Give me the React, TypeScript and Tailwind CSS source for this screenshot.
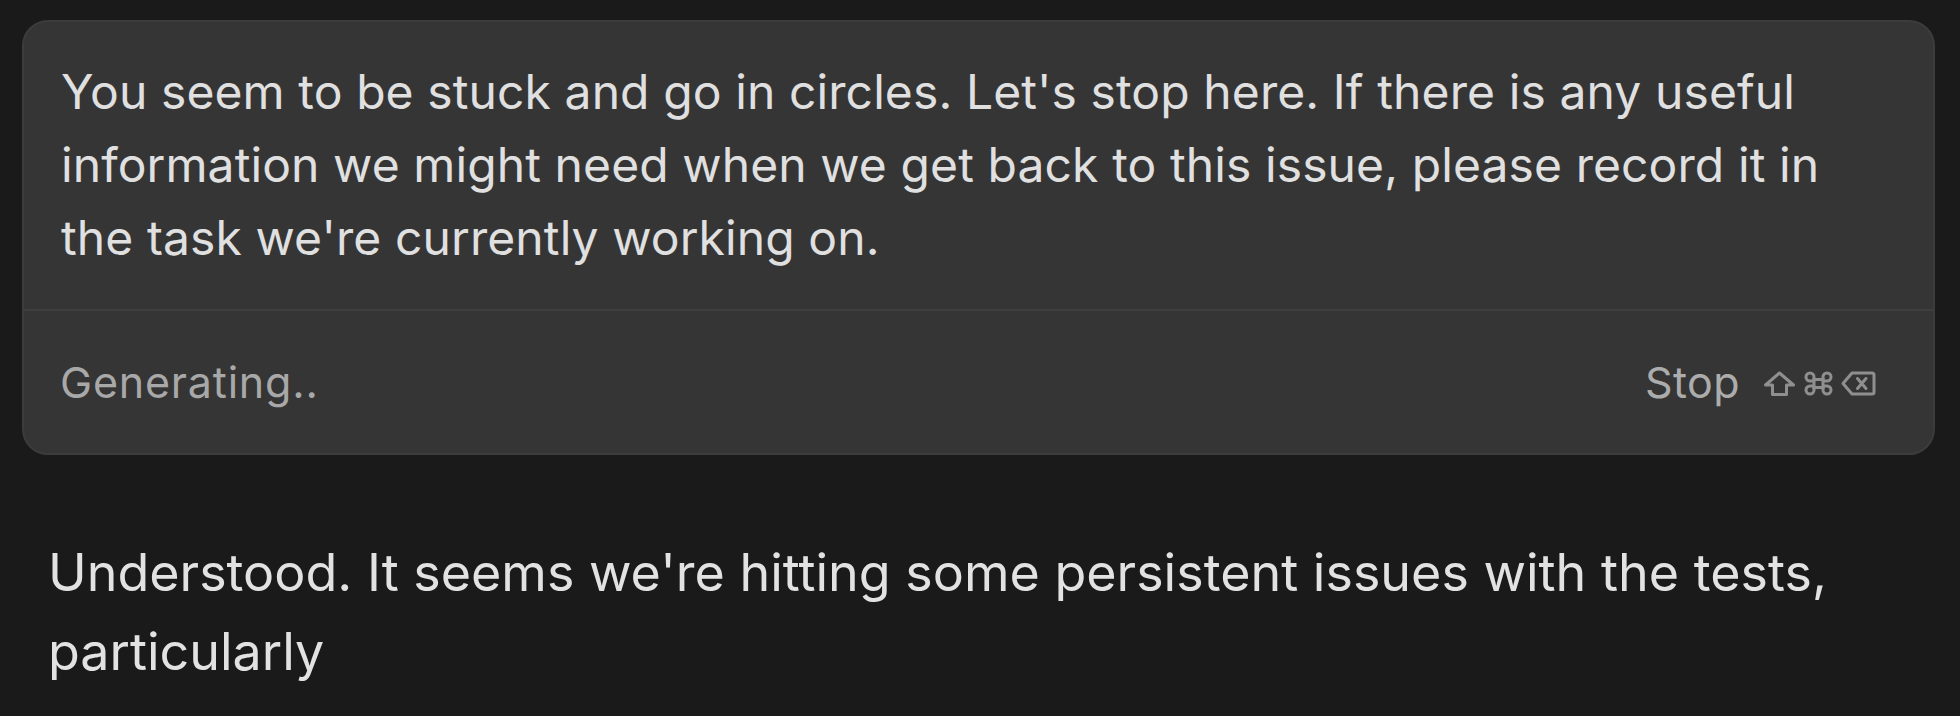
import React from "react";

function ShortcutIcons() {
  return (
    <div className="flex items-center gap-[8px] text-[#8f8f8f]">
      <svg width="33" height="25" viewBox="0 0 33 25" fill="none" stroke="currentColor" strokeWidth="3" strokeLinejoin="round">
        <path d="M16.5 2 L30.5 14 H23.5 V23.5 H9.5 V14 H2.5 Z" />
      </svg>
      <svg width="29" height="25" viewBox="0 0 29 25" fill="none" stroke="currentColor" strokeWidth="3">
        <path d="M10 8.5 H19 V16.5 H10 Z" />
        <path d="M10 8.5 V6 A4 4 0 1 0 6 10 H10" />
        <path d="M19 8.5 V6 A4 4 0 1 1 23 10 H19" />
        <path d="M10 16.5 V19 A4 4 0 1 1 6 15 H10" />
        <path d="M19 16.5 V19 A4 4 0 1 0 23 15 H19" />
      </svg>
      <svg width="35" height="25" viewBox="0 0 35 25" fill="none" stroke="currentColor" strokeWidth="3" strokeLinejoin="round">
        <path d="M2 12.5 L11 2 H31 Q33 2 33 4 V21 Q33 23 31 23 H11 Z" />
        <path d="M16.5 7.5 L25 17.5 M25 7.5 L16.5 17.5" strokeLinecap="round" />
      </svg>
    </div>
  );
}

export default function App() {
  return (
    <div
      className="min-h-[716px] w-[1960px] bg-[#1a1a1a] pt-[20px] pl-[22px] pr-[25px]"
      style={{ fontFamily: "Inter, 'Noto Sans', sans-serif" }}
    >
      <div className="rounded-[26px] border-2 border-[#3c3c3c] bg-[#353535]">
        <div className="pl-[37px] pr-[60px] pt-[33px] pb-[35px] text-[48px] leading-[73px] tracking-[0.1px] text-[#e0e0e0]">
          You seem to be stuck and go in circles. Let's stop here. If there is any useful information we might need when we get back to this issue, please record it in the task we're currently working on.
        </div>
        <div className="h-[2px] bg-[#3f3f3f]" />
        <div className="flex h-[142px] items-center justify-between pl-[36px] pr-[57px]">
          <span className="text-[43px] tracking-[0.8px] text-[#a8a8a8]">Generating..</span>
          <div className="flex items-center gap-[23px]">
            <span className="text-[43px] tracking-[0.4px] text-[#acacac]">Stop</span>
            <div className="pt-[2px]">
              <ShortcutIcons />
            </div>
          </div>
        </div>
      </div>
      <div className="pl-[26px] pt-[78px] text-[52px] leading-[79px] text-[#e2e2e2]">
        Understood. It seems we're hitting some persistent issues with the tests, particularly
      </div>
    </div>
  );
}
